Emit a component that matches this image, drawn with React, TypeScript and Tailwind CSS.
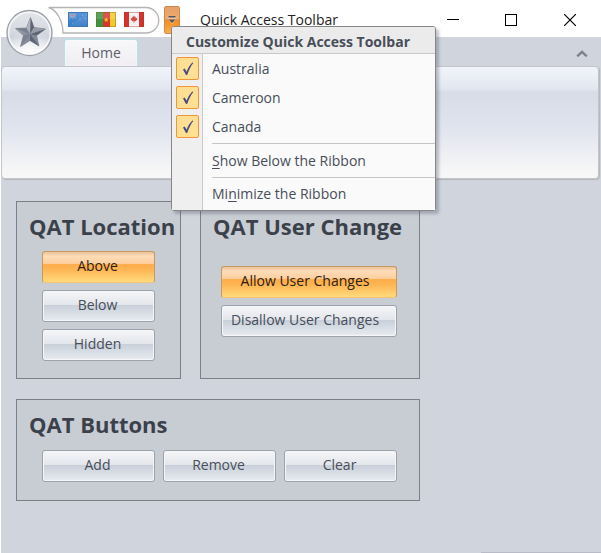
import { ReactNode } from "react";

function AustraliaFlag() {
  return (
    <svg viewBox="0 0 20 15" className="h-[15px] w-5" aria-hidden="true">
      <defs>
        <linearGradient id="ausField" x1="0" y1="0" x2="0" y2="1">
          <stop offset="0" stopColor="#5a97d8" />
          <stop offset="1" stopColor="#2f77c4" />
        </linearGradient>
      </defs>
      <rect width="20" height="15" fill="url(#ausField)" />
      <path d="M1 1 8 6.500M8 1 1 6.500" stroke="#8fb0dc" strokeWidth="1" />
      <path d="M4.500 1V6.500M1 3.500H8" stroke="#b9c6e0" strokeWidth="1.400" />
      <path d="M4.500 1V6.500M1 3.500H8" stroke="#a3819f" strokeWidth=".7" />
      <circle cx="4.500" cy="11" r=".6" fill="#8ab8e8" />
      <circle cx="14.500" cy="3.500" r=".5" fill="#a5c9ef" />
      <circle cx="12" cy="7" r=".5" fill="#a5c9ef" />
      <circle cx="17" cy="6.500" r=".5" fill="#a5c9ef" />
      <path d="M0 15 20 0V15z" fill="#fff" opacity=".08" />
      <rect x=".5" y=".5" width="19" height="14" fill="none" stroke="#3f78b8" />
    </svg>
  );
}

function CameroonFlag() {
  return (
    <svg viewBox="0 0 20 15" className="h-[15px] w-5" aria-hidden="true">
      <rect width="7" height="15" fill="#3c9440" />
      <rect x="7" width="7" height="15" fill="#d8342a" />
      <rect x="14" width="6" height="15" fill="#f2c928" />
      <rect width="20" height="7" fill="#fff" opacity=".15" />
      <path d="m10.300 5 .7 1.700 1.800.2-1.400 1.200.4 1.800-1.500-1-1.600 1 .4-1.800L7.700 6.900l1.900-.2z" fill="#f6b92f" />
      <rect x=".5" y=".5" width="19" height="14" fill="none" stroke="#6b6a1c" strokeOpacity=".4" />
    </svg>
  );
}

function CanadaFlag() {
  return (
    <svg viewBox="0 0 20 15" className="h-[15px] w-5" aria-hidden="true">
      <rect width="20" height="15" fill="#f4f2f2" />
      <rect width="5" height="15" fill="#d5332b" />
      <rect x="15" width="5" height="15" fill="#d5332b" />
      <path d="m10 3.500.9 1.500.9-.4-.2 1.700 1.500-.6-.3 1.400.6.500-2 1.600H10.300V11h-.6V9.200H8.600L6.600 7.600l.6-.5-.3-1.400 1.500.6-.2-1.700.9.4z" fill="#dd4a40" />
      <rect x=".5" y=".5" width="19" height="14" fill="none" stroke="#9e3a34" strokeOpacity=".4" />
    </svg>
  );
}

function CheckMark() {
  return (
    <svg viewBox="0 0 12 14" className="pointer-events-none absolute h-[14px] w-3" aria-hidden="true">
      <path d="M1 7.500 2.700 6.600 4.600 9.800C6 6 8 3 10.300.6L11.300 1C8.700 4.300 6.800 8.300 5.300 12.800L4 12.900z" fill="#454b80" />
    </svg>
  );
}

function Orb() {
  return (
    <svg viewBox="0 0 48 48" className="h-12 w-12" aria-hidden="true">
      <defs>
        <linearGradient id="orbFace" x1="0" y1="0" x2="0" y2="1">
          <stop offset="0" stopColor="#e4e6ea" />
          <stop offset=".45" stopColor="#d6dae1" />
          <stop offset=".6" stopColor="#ccd1da" />
          <stop offset="1" stopColor="#fbfcfd" />
        </linearGradient>
        <radialGradient id="orbGlow" cx=".5" cy="1" r=".6">
          <stop offset="0" stopColor="#fff" stopOpacity=".9" />
          <stop offset="1" stopColor="#fff" stopOpacity="0" />
        </radialGradient>
        <linearGradient id="starFace" x1="0" y1="0" x2="1" y2="1">
          <stop offset="0" stopColor="#b4b8c2" />
          <stop offset=".5" stopColor="#868c9a" />
          <stop offset="1" stopColor="#7b8190" />
        </linearGradient>
      </defs>
      <circle cx="24.500" cy="24" r="22.500" fill="url(#orbFace)" stroke="#9a9ea6" strokeWidth="1.300" />
      <circle cx="24.500" cy="24" r="21.500" fill="url(#orbGlow)" />
      <circle cx="24.500" cy="24" r="20.800" fill="none" stroke="#fff" strokeWidth="1.500" strokeOpacity=".75" />
      <path d="M25.500 8.500 29 18.500 40.500 20 31.500 26.500 34 37 25 31.500 15.500 37.500 18.500 26.500 10.500 19.500 21.500 19z" fill="url(#starFace)" stroke="#7a808c" strokeWidth=".7" />
      <path d="M25 25 25.500 8.500 29 18.500zM25 25 40.500 20 31.500 26.500zM25 25 34 37 25 31.500z" fill="#5d6474" />
      <path d="M25 25 15.500 37.500 18.500 26.500zM25 25 10.500 19.500 21.500 19z" fill="#7a8090" />
      <path d="M25 25 25.500 8.500 21.500 19z" fill="#aeb3bd" />
      <path d="M25 25 29 18.500 40.500 20z" fill="#979ca8" />
    </svg>
  );
}

function RibbonButton({ children, active = false, wide = false }: { children: ReactNode; active?: boolean; wide?: boolean }) {
  const tone = active
    ? "border-[#c69a62] border-b-[#f3c377] bg-[linear-gradient(#e9c399_0%,#fddcb8_14%,#fdcf9f_38%,#feac49_42%,#feb654_60%,#ffdb7c_100%)] text-[#2b2118]"
    : "border-[#9da1a9] bg-[linear-gradient(#f5f6f8_0%,#e3e6eb_45%,#c9d0da_48%,#e8ecf1_100%)] text-[#484e59] shadow-[inset_0_0_0_1px_#f5f6f8]";
  return (
    <button className={`h-8 rounded-[3px] border pb-[2px] text-[14px] leading-5 whitespace-nowrap ${wide ? "w-44 pr-2" : "w-[113px] pr-[2px]"} ${tone}`}>
      {children}
    </button>
  );
}

function Group({ title, className, children }: { title: string; className: string; children: ReactNode }) {
  return (
    <section className={`border border-[#7c7f86] bg-[#c8ccd3] pl-3 ${className}`}>
      <h2 className="pt-2 text-[22px] leading-8 font-bold whitespace-nowrap text-[#3b414b]">{title}</h2>
      {children}
    </section>
  );
}

function MenuCheck({ label }: { label: string }) {
  return (
    <label className="flex h-[29px] items-center">
      <span className="relative ml-1 flex h-[23px] w-[23px] items-center justify-center">
        <input type="checkbox" defaultChecked className="h-[23px] w-[23px] appearance-none rounded-[2px] border border-[#f29536] bg-[#ffe093]" />
        <CheckMark />
      </span>
      <span className="ml-[13px]">{label}</span>
    </label>
  );
}

function CustomizeMenu() {
  return (
    <div className="absolute top-[26px] left-[170px] w-[265px] rounded-[3px] border border-[#868686] bg-[#fafafa] text-[14px] leading-5 text-[#484e59] shadow-[3px_3px_3px_rgba(80,85,100,0.35)]">
      <div className="flex h-[27px] items-center rounded-t-[2px] border-b border-[#c9c9c9] bg-[#ebebeb] pt-[3px] pl-[14px] font-bold whitespace-nowrap">
        Customize Quick Access Toolbar
      </div>
      <div className="bg-[linear-gradient(90deg,#efefef_30px,#c9c9c9_30px,#c9c9c9_31px,#fafafa_31px)]">
        <MenuCheck label="Australia" />
        <MenuCheck label="Cameroon" />
        <MenuCheck label="Canada" />
        <hr className="mt-[2px] ml-10 border-[#c5c5c5]" />
        <button className="block h-[33px] w-full pl-10 text-left">
          <u className="underline-offset-2">S</u>how Below the Ribbon
        </button>
        <hr className="ml-10 border-[#c5c5c5]" />
        <button className="block h-8 w-full pl-10 text-left">
          Mi<u className="underline-offset-2">n</u>imize the Ribbon
        </button>
      </div>
    </div>
  );
}

export default function App() {
  return (
    <div className="relative flex min-h-screen flex-col border-l border-white bg-[#d0d4dd] font-['Open_Sans','Noto_Sans',sans-serif]">
      <header className="flex h-[37px] shrink-0 bg-white pr-px pl-[47px]">
        <div className="relative mt-[6px] h-7 w-28">
          <svg viewBox="0 0 112 28" className="absolute inset-0 h-7 w-28" aria-hidden="true">
            <path d="M.5 1.500H98A12.700 12.700 0 0 1 98 27H15C15 17 10 4 .5 1.500" fill="#fdfdfe" stroke="#b4b4b6" strokeWidth="1.300" />
          </svg>
          <div className="relative flex gap-2 pt-[6px] pl-5">
            <button aria-label="Australia"><AustraliaFlag /></button>
            <button aria-label="Cameroon"><CameroonFlag /></button>
            <button aria-label="Canada"><CanadaFlag /></button>
          </div>
        </div>
        <button
          aria-label="Customize Quick Access Toolbar"
          className="mt-[6px] ml-1 flex h-7 w-4 items-center justify-center rounded-[2px] border border-[#c98a4e] bg-[linear-gradient(#e5a168_0%,#efaa6c_45%,#f58a1f_50%,#f9ae4c_100%)]"
        >
          <svg viewBox="0 0 8 8" className="h-2 w-2" aria-hidden="true">
            <path d="M0 2H8M1 4H7L4 7.500z" stroke="#fff" strokeOpacity=".6" fill="none" />
            <path d="M.5 0H7.500V1.500H.5zM.5 3.500H7.500L4 7z" fill="#4f5665" />
          </svg>
        </button>
        <h1 className="ml-5 pt-[10px] text-[14px] leading-5 whitespace-nowrap text-[#222]">Quick Access Toolbar</h1>
        <div className="ml-auto flex h-10 items-center text-black">
          <button aria-label="Minimize" className="flex w-[58px] justify-center">
            <svg viewBox="0 0 12 12" className="h-3 w-3"><path d="M0 5.500H12" stroke="currentColor" /></svg>
          </button>
          <button aria-label="Maximize" className="flex w-[58px] justify-center">
            <svg viewBox="0 0 12 12" className="h-3 w-3"><rect x=".5" y=".5" width="11" height="11" fill="none" stroke="currentColor" /></svg>
          </button>
          <button aria-label="Close" className="flex w-[60px] justify-center">
            <svg viewBox="0 0 12 12" className="h-3 w-3"><path d="M0 0 12 12M12 0 0 12" stroke="currentColor" strokeWidth="1.200" /></svg>
          </button>
        </div>
      </header>

      <nav className="flex h-[29px] shrink-0 items-end justify-between pr-[13px] pl-[63px]">
        <button className="h-[27px] w-[74px] rounded-t-[3px] border border-b-0 border-[#b5e2e6] bg-[linear-gradient(#f7f8fa,#f1edf2)] text-[14px] leading-5 text-[#5b5f68] shadow-[inset_0_0_2px_#fff]">
          Home
        </button>
        <button aria-label="Collapse ribbon" className="mb-[9px]">
          <svg viewBox="0 0 12 7" className="h-[7px] w-3"><path d="M1.200 6.300 6 1.800 10.800 6.300" fill="none" stroke="#7b8089" strokeWidth="2.400" /></svg>
        </button>
      </nav>

      <div className="mr-[2px] h-[113px] shrink-0 rounded-[4px] border border-[#c3c5c9] bg-[linear-gradient(#f1f4fa_0%,#e2e7f0_19%,#d7dce7_23%,#e0e4ee_55%,#f7f7f7_95%)] shadow-[1px_1px_1px_#b4b6bc]" />

      <main className="ml-[15px] flex w-[404px] shrink-0 flex-col gap-5 pt-[22px]">
        <div className="flex justify-between">
          <Group title="QAT Location" className="h-[178px] w-[165px]">
            <div className="ml-[13px] flex flex-col gap-[7px] pt-[9px]">
              <RibbonButton active>Above</RibbonButton>
              <RibbonButton>Below</RibbonButton>
              <RibbonButton>Hidden</RibbonButton>
            </div>
          </Group>
          <Group title="QAT User Change" className="h-[178px] w-[220px]">
            <div className="ml-2 flex flex-col gap-[7px] pt-6">
              <RibbonButton active wide>Allow User Changes</RibbonButton>
              <RibbonButton wide>Disallow User Changes</RibbonButton>
            </div>
          </Group>
        </div>
        <Group title="QAT Buttons" className="h-[102px]">
          <div className="ml-[13px] flex gap-2 pt-[10px]">
            <RibbonButton>Add</RibbonButton>
            <RibbonButton>Remove</RibbonButton>
            <RibbonButton>Clear</RibbonButton>
          </div>
        </Group>
      </main>

      <div className="mt-auto flex justify-end">
        <div className="h-px w-1/5 bg-[#b9bcc6]" />
      </div>

      <button aria-label="Application menu" className="absolute top-[9px] left-1">
        <Orb />
      </button>
      <CustomizeMenu />
    </div>
  );
}
